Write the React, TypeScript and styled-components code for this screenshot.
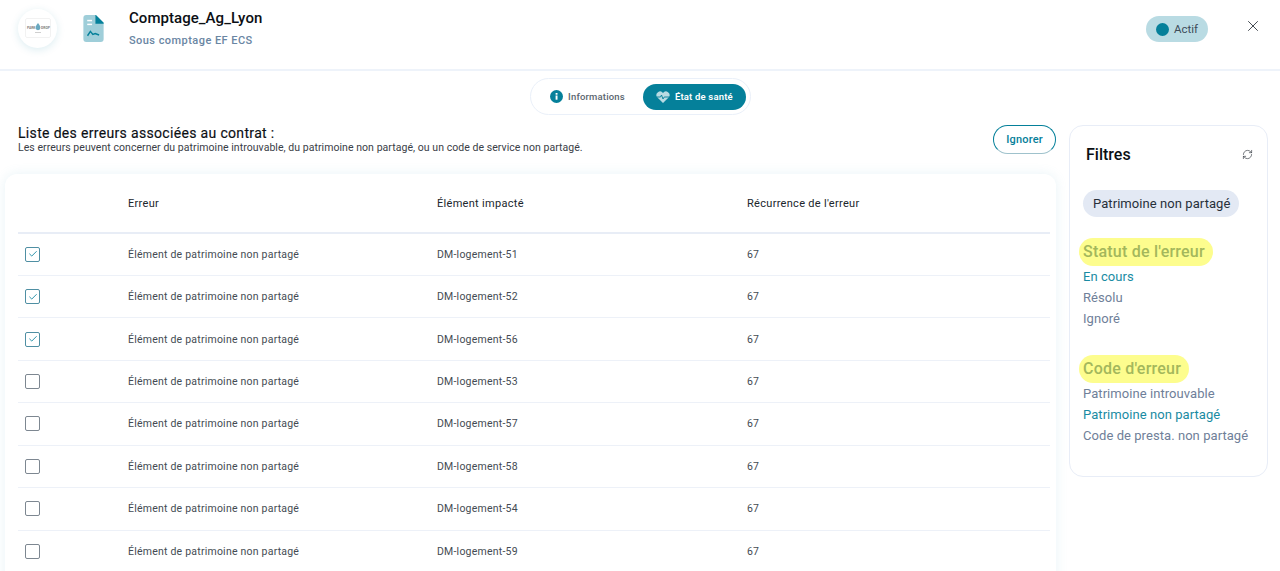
import React from "react";
import styled, { createGlobalStyle } from "styled-components";
import { X, RefreshCw, Check } from "lucide-react";

const ERRORS = [
  { element: "DM-logement-51", checked: true },
  { element: "DM-logement-52", checked: true },
  { element: "DM-logement-56", checked: true },
  { element: "DM-logement-53", checked: false },
  { element: "DM-logement-57", checked: false },
  { element: "DM-logement-58", checked: false },
  { element: "DM-logement-54", checked: false },
  { element: "DM-logement-59", checked: false },
];

const TEAL = "#05809a";

const GlobalStyle = createGlobalStyle`
  html, body {
    margin: 0;
    height: 571px;
    overflow: hidden;
    background: #fff;
    font-family: Roboto, "Liberation Sans", sans-serif;
  }
  * {
    box-sizing: border-box;
  }
`;

const Page = styled.div`
  width: 1280px;
  height: 571px;
  overflow: hidden;
`;

const Header = styled.header`
  display: flex;
  align-items: center;
  height: 71px;
  padding: 0 18px 13px 18px;
  border-bottom: 2px solid #eef3fa;
`;

const LogoCircle = styled.div`
  display: flex;
  align-items: center;
  justify-content: center;
  width: 39px;
  height: 39px;
  border-radius: 50%;
  background: #fff;
  box-shadow: 0 2px 8px rgba(5, 128, 154, 0.14);
  margin-right: 26px;
  flex-shrink: 0;
`;

const DocIcon = styled.svg`
  width: 21px;
  height: 27px;
  margin-right: 25px;
  flex-shrink: 0;
`;

const TitleBlock = styled.div`
  display: flex;
  flex-direction: column;
  flex: 1;
  align-self: flex-start;
  padding-top: 9px;
`;

const Title = styled.div`
  font-size: 15px;
  line-height: 18px;
  font-weight: 500;
  letter-spacing: 0.05px;
  color: #0b0f14;
`;

const Subtitle = styled.div`
  margin-top: 7px;
  font-size: 11px;
  line-height: 14px;
  font-weight: 500;
  letter-spacing: 0.45px;
  color: #6a86a3;
`;

const StatusPill = styled.div`
  display: flex;
  align-items: center;
  gap: 5px;
  width: 62px;
  height: 26px;
  padding-left: 10px;
  margin-top: 2px;
  margin-right: 36px;
  border-radius: 13px;
  background: #b9dbe3;
  font-size: 11.5px;
  color: #3e4c59;
`;

const StatusDot = styled.span`
  width: 13px;
  height: 13px;
  border-radius: 50%;
  background: ${TEAL};
`;

const CloseButton = styled.button`
  display: flex;
  padding: 0;
  margin-top: -5px;
  border: none;
  background: transparent;
  color: #3a4048;
`;

const TabsRow = styled.div`
  display: flex;
  justify-content: center;
  padding: 7px 0 0 1px;
`;

const Tabs = styled.div`
  display: flex;
  align-items: center;
  height: 37px;
  padding: 0 4px 0 19px;
  border: 1px solid #eaf0f9;
  border-radius: 19px;
`;

const Tab = styled.div<{ $active?: boolean }>`
  display: flex;
  align-items: center;
  justify-content: center;
  gap: 5px;
  height: 26px;
  width: ${(p) => (p.$active ? "103px" : "auto")};
  margin-left: ${(p) => (p.$active ? "18px" : "0")};
  border-radius: 13px;
  background: ${(p) => (p.$active ? TEAL : "transparent")};
  color: ${(p) => (p.$active ? "#fff" : "#5b6670")};
  font-size: 9.5px;
  font-weight: ${(p) => (p.$active ? 600 : 500)};
  letter-spacing: 0.18px;
`;

const Body = styled.div`
  display: flex;
  align-items: flex-start;
  gap: 13px;
  padding: 10px 12px 0 5px;
`;

const Main = styled.main`
  width: 1051px;
  flex-shrink: 0;
`;

const ListHead = styled.div`
  display: flex;
  justify-content: space-between;
  align-items: flex-start;
  height: 49px;
  padding-left: 13px;
`;

const ListTitle = styled.h2`
  margin: 0;
  font-size: 14px;
  line-height: 16px;
  font-weight: 400;
  letter-spacing: 0.33px;
  color: #0b0f14;
  -webkit-text-stroke: 0.15px #0b0f14;
`;

const ListHint = styled.p`
  margin: 1px 0 0;
  font-size: 10.5px;
  line-height: 12px;
  letter-spacing: 0.05px;
  color: #3a4047;
`;

const IgnoreButton = styled.button`
  width: 63px;
  height: 29px;
  border: 1px solid ${TEAL};
  border-bottom-color: #9fc2cc;
  border-radius: 15px;
  background: #fff;
  color: ${TEAL};
  font-family: inherit;
  font-size: 11px;
  font-weight: 500;
  letter-spacing: 0.2px;
`;

const TableCard = styled.section`
  padding: 0 6px 0 13px;
  height: 420px;
  border-radius: 12px;
  background: #fff;
  box-shadow: 0 0 12px rgba(90, 170, 200, 0.14);
`;

const Row = styled.div`
  display: grid;
  grid-template-columns: 110px 309px 310px 1fr;
  align-items: center;
  height: 42.45px;
  border-bottom: 1px solid #edf1f8;
  font-size: 10.5px;
  letter-spacing: 0.22px;
  color: #444b53;
`;

const HeadRow = styled(Row)`
  height: 59.5px;
  padding-top: 2px;
  border-bottom: 2px solid #e8edf6;
  font-size: 11px;
  letter-spacing: 0.3px;
  color: #20262c;
`;

const CheckBox = styled.span<{ $checked: boolean }>`
  display: flex;
  align-items: center;
  justify-content: center;
  width: 15px;
  height: 15px;
  margin-left: 7px;
  border: 1px solid ${(p) => (p.$checked ? "#4f8fa3" : "#7d8791")};
  border-radius: 2px;
  color: ${TEAL};
`;

const FilterCard = styled.aside`
  width: 199px;
  height: 352px;
  padding: 20px 14px 0 13px;
  border: 1px solid #e8edf7;
  border-radius: 14px;
  background: #fff;
`;

const FilterHead = styled.div`
  display: flex;
  justify-content: space-between;
  align-items: center;
  padding-left: 3px;
  height: 17px;
  color: #3a4048;
`;

const FilterTitle = styled.h3`
  margin: 0;
  font-size: 16px;
  font-weight: 500;
  color: #0b0f14;
`;

const Chip = styled.div`
  display: inline-flex;
  align-items: center;
  height: 27px;
  margin-top: 27px;
  padding: 0 9px 0 10px;
  border-radius: 14px;
  background: #e3e9f4;
  font-size: 13px;
  letter-spacing: 0.07px;
  color: #27303a;
`;

const FilterSection = styled.div<{ $gap: number }>`
  margin-top: ${(p) => p.$gap}px;
  margin-left: -4px;
  margin-right: -12px;
`;

const Highlight = styled.div`
  display: inline-block;
  height: 28px;
  padding: 0 8px 0 4px;
  border-radius: 14px;
  background: #fdfd8e;
  font-size: 16px;
  line-height: 28px;
  font-weight: 500;
  letter-spacing: 0.22px;
  color: #a3b75c;
`;

const FilterList = styled.ul`
  margin: 0;
  padding: 0 0 0 4px;
  list-style: none;
`;

const FilterItem = styled.li<{ $active?: boolean }>`
  height: 21px;
  font-size: 13px;
  line-height: 21px;
  letter-spacing: 0.06px;
  white-space: nowrap;
  color: ${(p) => (p.$active ? "#1a8ba3" : "#6f8099")};
`;

function App() {
  return (
    <Page>
      <GlobalStyle />
      <Header>
        <LogoCircle>
          <svg width="26" height="20" viewBox="0 0 26 20">
            <rect x="0.5" y="0.5" width="25" height="19" rx="1.5" fill="#fff" stroke="#f2f2f2" />
            <text x="2" y="11" fontFamily="Roboto, sans-serif" fontSize="3.4" fontWeight="700" fill="#7f7f7f">PARK</text>
            <text x="16" y="11" fontFamily="Roboto, sans-serif" fontSize="3.4" fontWeight="700" fill="#7f7f7f">DROP</text>
            <path d="M13 5c1.800 2.400 2.400 3.600 2.400 4.800a2.400 2.400 0 0 1-4.800 0c0-1.200.6-2.400 2.400-4.800z" fill="#6aa9c0" />
            <rect x="10" y="14" width="6" height="0.800" fill="#c4c4c4" />
          </svg>
        </LogoCircle>
        <DocIcon viewBox="0 0 21 28">
          <path d="M3 0h10l8 8v17a3 3 0 0 1-3 3H3a3 3 0 0 1-3-3V3a3 3 0 0 1 3-3z" fill="#9fced9" />
          <path d="M12.5 0H13l8 8v1h-8.500z" fill={TEAL} />
          <rect x="4" y="5" width="5" height="1.500" fill="#fff" />
          <rect x="4" y="9" width="5" height="1.500" fill="#fff" />
          <path d="M4.300 21.500l3-4.500 2.500 3.200 2.500-1 4 1.500" fill="none" stroke={TEAL} strokeWidth="1.500" />
        </DocIcon>
        <TitleBlock>
          <Title>Comptage_Ag_Lyon</Title>
          <Subtitle>Sous comptage EF ECS</Subtitle>
        </TitleBlock>
        <StatusPill>
          <StatusDot />
          Actif
        </StatusPill>
        <CloseButton>
          <X size={18} strokeWidth={1.25} />
        </CloseButton>
      </Header>

      <TabsRow>
        <Tabs>
          <Tab>
            <svg width="13" height="13" viewBox="0 0 13 13">
              <circle cx="6.500" cy="6.500" r="6.500" fill={TEAL} />
              <rect x="5.600" y="5.500" width="1.900" height="4.200" fill="#fff" />
              <rect x="5.600" y="3" width="1.900" height="1.700" fill="#fff" />
            </svg>
            Informations
          </Tab>
          <Tab $active>
            <svg width="14" height="12" viewBox="0 0 14 12">
              <path d="M7 12L1.200 6.300A3.500 3.500 0 0 1 7 2a3.500 3.500 0 0 1 5.800 4.300z" fill="#b9dbe3" />
              <path d="M0.500 6h4l1-2 1.500 4 1.200-2h5.300" fill="none" stroke={TEAL} strokeWidth="0.900" />
            </svg>
            État de santé
          </Tab>
        </Tabs>
      </TabsRow>

      <Body>
        <Main>
          <ListHead>
            <div>
              <ListTitle>Liste des erreurs associées au contrat :</ListTitle>
              <ListHint>
                Les erreurs peuvent concerner du patrimoine introuvable, du patrimoine non partagé, ou un code de service non partagé.
              </ListHint>
            </div>
            <IgnoreButton>Ignorer</IgnoreButton>
          </ListHead>
          <TableCard>
            <HeadRow>
              <span />
              <span>Erreur</span>
              <span>Élément impacté</span>
              <span>Récurrence de l'erreur</span>
            </HeadRow>
            {ERRORS.map((error) => (
              <Row key={error.element}>
                <CheckBox $checked={error.checked}>
                  {error.checked && <Check size={10} strokeWidth={2} />}
                </CheckBox>
                <span>Élément de patrimoine non partagé</span>
                <span>{error.element}</span>
                <span>67</span>
              </Row>
            ))}
          </TableCard>
        </Main>

        <FilterCard>
          <FilterHead>
            <FilterTitle>Filtres</FilterTitle>
            <RefreshCw size={11} strokeWidth={1.5} />
          </FilterHead>
          <Chip>Patrimoine non partagé</Chip>
          <FilterSection $gap={21}>
            <Highlight>Statut de l'erreur</Highlight>
            <FilterList>
              <FilterItem $active>En cours</FilterItem>
              <FilterItem>Résolu</FilterItem>
              <FilterItem>Ignoré</FilterItem>
            </FilterList>
          </FilterSection>
          <FilterSection $gap={26}>
            <Highlight>Code d'erreur</Highlight>
            <FilterList>
              <FilterItem>Patrimoine introuvable</FilterItem>
              <FilterItem $active>Patrimoine non partagé</FilterItem>
              <FilterItem>Code de presta. non partagé</FilterItem>
            </FilterList>
          </FilterSection>
        </FilterCard>
      </Body>
    </Page>
  );
}

export default App;
